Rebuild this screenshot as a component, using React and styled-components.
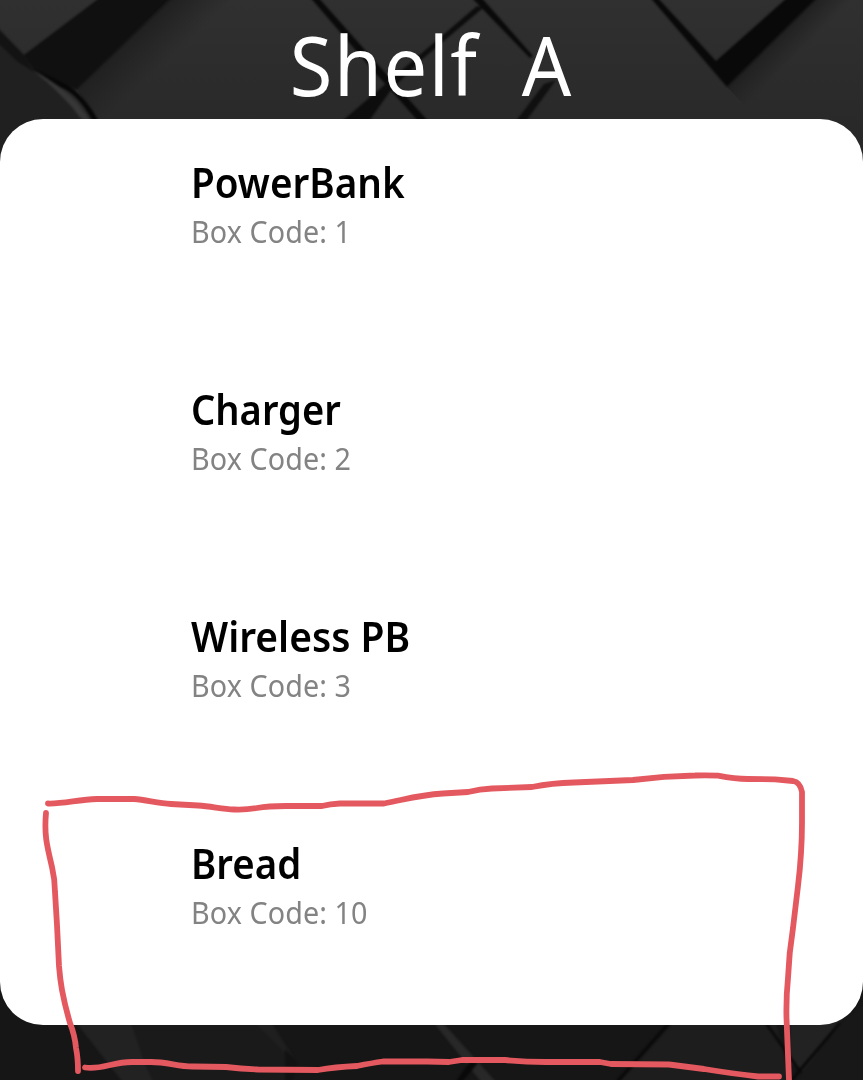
import React from "react";
import styled, { createGlobalStyle } from "styled-components";

const GlobalStyle = createGlobalStyle`
  body { margin: 0; background: #161616; overflow: hidden; }
  * { box-sizing: border-box; }
`;

const Screen = styled.main`
  position: relative;
  display: flex;
  flex-direction: column;
  width: 863px;
  height: 1080px;
  overflow: hidden;
  background: #161616;
  font-family: "Noto Sans", "Open Sans", sans-serif;
`;

const Backdrop = styled.svg`
  position: absolute;
  inset: 0;
`;

const Header = styled.header`
  position: relative;
  display: flex;
  justify-content: center;
  height: 119px;
  flex: none;
`;

const Title = styled.h1`
  margin: 0;
  padding: 4px 0 0 0;
  font-size: 83px;
  line-height: 119px;
  font-weight: 400;
  letter-spacing: 1.6px;
  color: #fff;
  white-space: pre;
  transform: scaleX(${(p) => p.$stretch});
`;

const Card = styled.ul`
  position: relative;
  flex: none;
  height: 906px;
  margin: 0;
  padding: 0;
  list-style: none;
  background: #fff;
  border-radius: 43px;
  overflow: hidden;
`;

const Row = styled.li`
  display: flex;
  flex-direction: column;
  align-items: flex-start;
  height: 227px;
  padding: 33px 0 0 191.4px;
`;

const Name = styled.span`
  font-size: 42px;
  line-height: 60px;
  font-weight: 600;
  color: #000;
  white-space: nowrap;
  transform-origin: 0 50%;
  transform: scaleX(${(p) => p.$stretch});
`;

const Code = styled.span`
  font-size: 31px;
  line-height: 38px;
  font-weight: 400;
  letter-spacing: 0.1px;
  color: #838383;
  white-space: nowrap;
  transform-origin: 0 50%;
  transform: scaleX(0.926);
`;

const Marker = styled.svg`
  position: absolute;
  inset: 0;
  pointer-events: none;
`;

const items = [
  { name: "PowerBank", code: 1, nameStretch: 0.92 },
  { name: "Charger", code: 2, nameStretch: 0.907 },
  { name: "Wireless PB", code: 3, nameStretch: 0.928 },
  { name: "Bread", code: 10, nameStretch: 0.915 },
];

function Tiles() {
  return (
    <Backdrop width="863" height="1080" viewBox="0 0 863 1080" aria-hidden="true">
      <defs>
        <linearGradient id="top" x1="0" y1="0" x2="0" y2="1">
          <stop offset="0" stopColor="#303030" />
          <stop offset="0.6" stopColor="#2a2a2a" />
          <stop offset="1" stopColor="#262626" />
        </linearGradient>
        <linearGradient id="shade" gradientUnits="userSpaceOnUse" x1="125" y1="42" x2="154" y2="73">
          <stop offset="0" stopColor="#202020" />
          <stop offset="1" stopColor="#202020" stopOpacity="0" />
        </linearGradient>
        <linearGradient id="shadeRight" gradientUnits="userSpaceOnUse" x1="772" y1="42" x2="791" y2="61">
          <stop offset="0" stopColor="#202020" />
          <stop offset="1" stopColor="#202020" stopOpacity="0" />
        </linearGradient>
        <filter id="soft" x="-5%" y="-5%" width="110%" height="110%" colorInterpolationFilters="sRGB">
          <feGaussianBlur stdDeviation="0.8" />
        </filter>
      </defs>
      <rect width="863" height="180" fill="url(#top)" />
      <path d="M76 88L174 -4H290V119H96Z" fill="url(#shade)" />
      <path d="M727 87L818 -4H863V119H758Z" fill="url(#shadeRight)" />
      <g filter="url(#soft)">
        <path d="M-5 24L24 55L35 70L90 125L-5 180Z" fill="#202020" />
        <path d="M-5 26L24 55L34 72L18 62L-5 40Z" fill="#131313" />
        <path d="M24 55L102 -4L174 -4L76 90L66 84L34 70Z" fill="#101010" />
        <path d="M34 72Q62 86 78 104L91 122L82 120Q62 92 34 72Z" fill="#373737" />
        <path d="M32 68L66 84Q84 95 98 120L92 120Q78 94 60 87Z" fill="#070707" />
        <path d="M309 -4L317 -4L428 121L418 121L389 88L377 75Z" fill="#0a0a0a" />
        <path d="M341 122L477 6L483 8L420 61L391 90L369 121Z" fill="#0d0d0d" />
        <path d="M470 -4L480 -4L533 56L530 58Z" fill="#0a0a0a" />
        <path d="M516 121L544 84L556 80L526 121Z" fill="#101010" />
        <path d="M649 -4L656 -4L716 61L788 -3L818 -3L727 87Z" fill="#090909" />
      </g>
      <g filter="url(#soft)">
        <path d="M74 1020L130 1020L155 1085L125 1085Z" fill="#222" />
        <path d="M130 1020L145 1065L155 1085L290 1085L290 1052L252 1020Z" fill="#1a1a1a" />
        <path d="M252 1020L270 1020L295 1060L290 1058Z" fill="#1f1f1f" />
        <path d="M434 1023L443 1023L497 1083L482 1083Z" fill="#282828" />
        <path d="M285 1049L297 1062L292 1082L285 1085Z" fill="#121212" />
        <path d="M455 1083L470 1061L478 1063L461 1083Z" fill="#090909" />
        <path d="M620 1082L674 1022L776 1022L790 1082Z" fill="#1d1d1d" />
        <path d="M617 1082L669 1023" stroke="#090909" strokeWidth="3" />
        <path d="M790 1023L845 1015L804 1072L790 1064Z" fill="#222" />
        <path d="M766 1023L801 1073M790 1082L840 1023" stroke="#0a0a0a" strokeWidth="3" />
        <path d="M841 1023L865 1000V1085H792Z" fill="#181818" />
      </g>
    </Backdrop>
  );
}

export default function App() {
  return (
    <>
      <GlobalStyle />
      <Screen>
        <Tiles />
        <Header>
          <Title $stretch={0.935}>{"Shelf  A"}</Title>
        </Header>
        <Card>
          {items.map((item) => (
            <Row key={item.code}>
              <Name $stretch={item.nameStretch}>{item.name}</Name>
              <Code>Box Code: {item.code}</Code>
            </Row>
          ))}
        </Card>
        <Marker width="863" height="1080" viewBox="0 0 863 1080" aria-hidden="true">
          <g fill="none" stroke="#e4595f" strokeWidth="5.8" strokeLinecap="round" strokeLinejoin="round">
            <path d="M48 803.500C64 804 78 799.500 97 799H134C147 800 158 803.500 171 804L198 805.500C212 806.500 222 809 234 809.500Q246 810 257 808Q268 806 286 806H322Q330 804 340 803.500H384C407 799 419 795 443 793.500L468 792Q480 789 492 788.500L532 787Q552 783 574 782.500L633 780Q664 776 695 775.500Q707 775 718 775.700Q735 779 748 779L775 779.300L793 781Q800 782 802 792V822Q802 838 801 853Q800 870 798 886L793 928Q789 953 788 978Q786 998 786.500 1018L789 1080" />
            <path d="M46 813C44 835 47 846 52 867Q55 880 55 892L57 925L59 966Q60 979 62 990Q65 1006 70 1023Q75 1036 76 1048Q78 1058 78 1071" />
            <path d="M85 1067.500C102 1070 112 1062 132 1062H151C168 1062 179 1067 194 1066.500L226 1067Q242 1069 258 1069.500L318 1070Q335 1067 357 1066Q372 1063 383 1061.500H427L449 1062L462 1060L505 1060Q525 1062 546 1062H600L611 1064L669 1064.500L704 1069Q735 1074 758 1076.500H779" />
          </g>
        </Marker>
      </Screen>
    </>
  );
}
